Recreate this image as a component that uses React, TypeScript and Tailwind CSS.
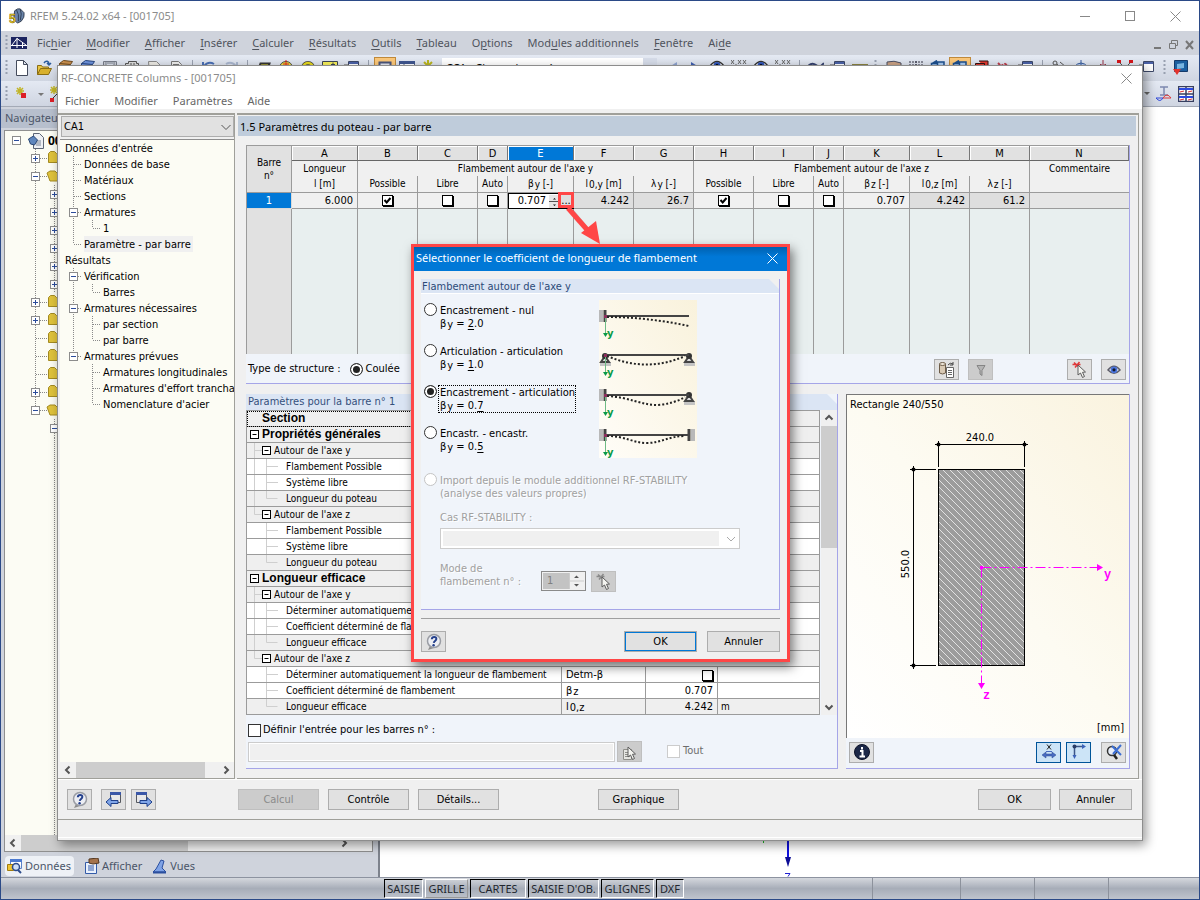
import React, { useState } from 'react';
import type { ReactNode } from 'react';

const TAHOMA = "font-['DejaVu_Sans_Condensed','DejaVu_Sans',sans-serif]";
const SEGOE = "font-['Noto_Sans',sans-serif]";

/* ---------- icons ---------- */

const glyphs: Record<string, ReactNode> = {
  doc: <path d="M2.500.5h7l4 4v11h-11zM9.500.5v4h4" fill="#fff" stroke="#444b5c" />,
  folder: (
    <>
      <path d="M1.500 14.500v-9h4l1 1.500h6v3" fill="#e8c545" stroke="#8a6d13" />
      <path d="M1.500 14.500l3-6h11l-3 6z" fill="#d8b02c" stroke="#8a6d13" />
      <path d="M8 3c2-3 5-2 5 1m-2-1l2 2 2-2" fill="none" stroke="#2a5a9c" strokeWidth="1.500" />
    </>
  ),
  brown: <path d="M1.500 3.500l4-3 9 1-2 3v9h-11zM1.500 3.500l11 1" fill="#c98f4e" stroke="#6e4a1e" />,
  blue: <path d="M1.500 3.500l4-3 9 1-2 3v9h-11zM1.500 3.500l11 1" fill="#6d92dc" stroke="#26447f" />,
  disk: <path d="M1.500 1.500h13v13h-13zM4 1v5h8V1M5 3h6" fill="#c9cdd6" stroke="#777c88" />,
  calc: <path d="M1.500 3.500h3v-2h8v2h2v11h-13zM4 5.500h8M7 3v3m3-3v3" fill="#ddd" stroke="#555" />,
  paper: <path d="M2.500 1.500h8l4 4-3 9h-8z" fill="#eceae4" stroke="#888" />,
  print: <path d="M3.500 1.500h7l3 3v10h-10zM5 4.500h6" fill="#eee" stroke="#777" />,
  undo: <path d="M3 10C2 4 8 1 13 4M2 2v6h6" fill="none" stroke="#4a6fb5" strokeWidth="2" />,
  redo: <path d="M13 10C14 4 8 1 3 4m11-2v6H8" fill="none" stroke="#a9b6cf" strokeWidth="2" />,
  shape: <path d="M4.500 3.500h9l-3 9h-9z" fill="#f1e437" stroke="#333" strokeWidth="2" />,
  circle: <><circle cx="8" cy="8" r="6.500" fill="#f3e83c" stroke="#444" /><path d="M8 0v6M5 4h6" stroke="#d22" /></>,
  ring: <><circle cx="8" cy="8" r="5" fill="none" stroke="#444" strokeWidth="4" /><circle cx="8" cy="8" r="5" fill="none" stroke="#e6d81e" strokeWidth="2.500" /></>,
  sheet: <path d="M.5 1.500h15v12H.5zM9 4.500h4m-2-2v4" fill="#f6ef5b" stroke="#3d4555" />,
  win: <><path d="M4.500 1.500h10v10h-10z" fill="#fff" stroke="#3d4868" /><path d="M5 2h9v2H5z" fill="#4b62a8" /><path d="M0 5h5" stroke="#555" /></>,
  panel: <path d="M2.500 2.500h11v9h-11zM4 7h7" fill="#e5e8f0" stroke="#4b557a" strokeWidth="2" />,
  grid: <><path d="M.5 1.500h15v12H.5zM.5 6h15M5 4v9" fill="#fff" stroke="#5a647f" /><path d="M0 1h16v3H0z" fill="#3f568f" /></>,
  star: <path d="M7 0v12M1.500 6h11M3 2l8 8m0-8l-8 8" stroke="#b9b41e" strokeWidth="2" />,
  left: <path d="M12 2v10L4 7z" fill="#8ea2cf" />,
  right: <path d="M4 2v10l8-5z" fill="#3f5fb0" />,
  eye: <><path d="M1 6q7-9 14 0-7 7-14 0z" fill="#fff" stroke="#333" strokeWidth="1.500" /><circle cx="8" cy="5.500" r="3.500" fill="#2d52b5" /><circle cx="8" cy="5.500" r="1.500" fill="#000" /></>,
  xxx: <path d="M0 0l3 4m0-4L0 4M7 0l3 4m0-4L7 4M12 0l3 4m0-4l-3 4M5 4v1" stroke="#666" fill="none" />,
  wave: <path d="M0 6q4-4 8-1t8-2" fill="none" stroke="#34406e" strokeWidth="2" />,
  tag: <path d="M0 5h16M2 4v2m4-2v2m6-2v2" fill="none" stroke="#8b8440" strokeWidth="2" />,
  hand: <path d="M1 2q7-2 14 1v5H1z" fill="#c9a184" stroke="#4b4f63" />,
  dots: <path d="M1 2h14M1 5h14M8 1v6" stroke="#334" strokeDasharray="2 1" />,
  cube: <path d="M1.500 5.500v-2h6v8h-6zM5 2h9v8H8M1.500 4L7 .5" fill="#a7c8ee" stroke="#1d4f8e" strokeWidth="1.500" />,
  redcube: <path d="M1.500 5.500v-2h9v8h-9zM5 1h9v8h-3" fill="#e23b31" stroke="#301313" />,
  pins: <path d="M2 3l3 3 4-2 5 3" fill="none" stroke="#ba3c4a" strokeWidth="2" strokeDasharray="3 1" />,
  loop: <><circle cx="4" cy="3" r="2" fill="none" stroke="#555" /><path d="M9 2l6 5M6 4l3 4" stroke="#555" /></>,
  arc: <path d="M1 7q7-8 14 0zM8 0v6" fill="#b9cdf0" stroke="#345a9c" />,
  mirror: <path d="M8 0v14M6 4l-4 5h4zm4 0l4 5h-4z" fill="none" stroke="#963344" />,
  node: <><path d="M2 2l6 6 6-6" fill="none" stroke="#555" /><path d="M0 0h4v3H0zm12 0h4v3h-4z" fill="#d4161b" /></>,
  cube3d: <><path d="M1.500.5h13v11h-13z" fill="#1c5f9f" stroke="#143a6a" /><path d="M4 4l7-1v5l-7 1z" fill="#78b4e0" /><path d="M0 9h8l-4 6z" fill="#e2322c" /></>,
};

function Glyph({ name, className = 'size-4' }: { name: string; className?: string }) {
  return (
    <svg viewBox="0 0 16 16" className={`${className} shrink-0`} aria-hidden="true">
      {glyphs[name]}
    </svg>
  );
}

function ToolButton({ name, active = false }: { name: string; active?: boolean }) {
  return (
    <button
      type="button"
      aria-label={name}
      className={`flex h-[22px] w-[22px] shrink-0 items-center justify-center ${
        active ? 'border border-[#c08a3c] bg-[#fbc779]' : ''
      }`}
    >
      <Glyph name={name} />
    </button>
  );
}

function Tools({ names, active = '' }: { names: string[]; active?: string }) {
  return (
    <>
      {names.map((n, i) =>
        n === '|' ? (
          <span key={i} className="mx-[5px] h-4 w-px shrink-0 bg-[#9aa1b0]" />
        ) : (
          <ToolButton key={i} name={n} active={active === `${n}${i}`} />
        ),
      )}
    </>
  );
}

function Grip() {
  return (
    <svg viewBox="0 0 3 16" className="h-4 w-[3px] shrink-0" aria-hidden="true">
      <path d="M1.500 0v16" stroke="#98a0b0" strokeWidth="2" strokeDasharray="2 2" />
    </svg>
  );
}

function Chevron({ dir, className = 'size-4' }: { dir: 'up' | 'down' | 'left' | 'right'; className?: string }) {
  const d = {
    up: 'M4.500 9.500L8 6l3.500 3.500',
    down: 'M4.500 6.500L8 10l3.500-3.500',
    left: 'M9.500 4.500L6 8l3.500 3.500',
    right: 'M6.500 4.500L10 8l-3.500 3.500',
  }[dir];
  return (
    <svg viewBox="0 0 16 16" className={`${className} shrink-0`} aria-hidden="true">
      <path d={d} fill="none" stroke="#555" strokeWidth="2" />
    </svg>
  );
}

function Cross({ className }: { className: string }) {
  return (
    <svg viewBox="0 0 11 11" className={`size-[11px] ${className}`} aria-hidden="true">
      <path d="M.5.5l10 10m0-10l-10 10" stroke="currentColor" fill="none" />
    </svg>
  );
}

function HelpIcon() {
  return (
    <svg viewBox="0 0 18 18" className="size-[18px]" aria-hidden="true">
      <path d="M5 13l-2 4 6-2z" fill="#8b8b8b" />
      <circle cx="9" cy="8" r="6.500" fill="#eceef4" stroke="#9a9da4" strokeWidth="1.500" />
      <path d="M6.800 6.200C7 3.300 11.800 3.300 11.300 6.200 11 8 9 8 8.800 9.800" fill="none" stroke="#24408c" strokeWidth="2" />
      <circle cx="8.600" cy="12.200" r="1.200" fill="#24408c" />
    </svg>
  );
}

function SheetArrow({ dir }: { dir: 'left' | 'right' }) {
  return (
    <svg viewBox="0 0 18 18" className="size-[18px]" aria-hidden="true">
      {dir === 'left' ? (
        <>
          <path d="M5.500 1.500h10v10h-10z" fill="#e8e8ea" stroke="#55585f" />
          <path d="M5 1h11v3H5z" fill="#3a57a8" />
          <path d="M1 11l5-4.500v3h7v3H6v3z" fill="#7fa5e8" stroke="#1d3f8a" />
        </>
      ) : (
        <>
          <path d="M1.500 1.500h10v10h-10z" fill="#e8e8ea" stroke="#55585f" />
          <path d="M1 1h11v3H1z" fill="#3a57a8" />
          <path d="M17 11l-5-4.500v3H5v3h7v3z" fill="#7fa5e8" stroke="#1d3f8a" />
        </>
      )}
    </svg>
  );
}

function PickIcon({ tone = 'red', list = false }: { tone?: 'red' | 'gray'; list?: boolean }) {
  const c = tone === 'red' ? '#e0383a' : '#8a8a8a';
  return (
    <svg viewBox="0 0 18 18" className="size-[18px]" aria-hidden="true">
      {list ? (
        <path d="M2.500 6.500h8v10h-8zM4 9.500h5M4 11.500h5M4 13.500h5" fill="#e6e6e2" stroke="#8f8f8a" />
      ) : (
        <path d="M3 1.500l5 4.500M8.500 1L4 6.500M1.500 3.500h8" stroke={c} strokeWidth="1.500" />
      )}
      <path d="M7 4v10l2.500-2 2 4.500 2-1-2-4.200 3-.3z" fill="#f4f4f0" stroke="#5c5c5c" />
    </svg>
  );
}

function EyeIcon() {
  return (
    <svg viewBox="0 0 18 18" className="size-[18px]" aria-hidden="true">
      <path d="M3 9q6-7.500 12 0-6 6.500-12 0z" fill="#eef2fb" stroke="#5c5c68" strokeWidth="1.500" />
      <circle cx="9" cy="8.800" r="3.400" fill="#4a74dc" />
      <circle cx="9" cy="8.800" r="1.600" fill="#101830" />
    </svg>
  );
}

function LogoIcon() {
  return (
    <svg viewBox="0 0 18 18" className="size-[17px]" aria-hidden="true">
      <path d="M7 3q3-3 6-2l4 4q1 5-3 9l-4 2-4-4z" fill="#6a85ab" stroke="#333e50" />
      <path d="M9 2q3 4 2 12M13 1q2 5 0 12" fill="none" stroke="#2d3b52" />
      <text x="1" y="16" fontSize="13" fontWeight="700" fill="#f3d22b" stroke="#5e4d00" strokeWidth=".5" fontFamily="Liberation Sans, sans-serif">5</text>
    </svg>
  );
}

/* ---------- small controls ---------- */

function PushButton({ children, className = '', disabled = false }: { children: ReactNode; className?: string; disabled?: boolean }) {
  return (
    <button
      type="button"
      disabled={disabled}
      className={`h-[21px] shrink-0 border text-center leading-[19px] ${
        disabled ? 'border-[#bfbfbf] bg-[#ccc] text-[#8a8a8a]' : 'border-[#adadad] bg-[#e1e1e1] text-black'
      } ${className}`}
    >
      {children}
    </button>
  );
}

function IconButton({ label, children, tone = 'normal' }: { label: string; children: ReactNode; tone?: 'normal' | 'on' | 'off' }) {
  const colors = {
    normal: 'border-[#adadad] bg-[#e1e1e1]',
    on: 'border-[#005499] bg-[#cce4f7]',
    off: 'border-[#bfbfbf] bg-[#ccc]',
  }[tone];
  return (
    <button type="button" aria-label={label} disabled={tone === 'off'} className={`flex h-[21px] w-[25px] shrink-0 items-center justify-center border ${colors}`}>
      {children}
    </button>
  );
}

function GridCheck({ label, initial = false }: { label: string; initial?: boolean }) {
  const [on, setOn] = useState(initial);
  return (
    <span className="inline-grid size-[11px] align-middle">
      <input
        type="checkbox"
        aria-label={label}
        checked={on}
        onChange={() => setOn(!on)}
        className="col-start-1 row-start-1 size-[11px] appearance-none border border-black bg-white shadow-[1px_1px_0_#000]"
      />
      {on && (
        <svg viewBox="0 0 11 11" className="pointer-events-none col-start-1 row-start-1 size-[11px]" aria-hidden="true">
          <path d="M2.500 5L4.700 7.500 8.500 3" fill="none" stroke="#000" strokeWidth="2" />
        </svg>
      )}
    </span>
  );
}

const RADIO =
  'size-[13px] shrink-0 appearance-none rounded-full border border-[#333] bg-white checked:bg-[#222] checked:shadow-[inset_0_0_0_2px_#fff] disabled:border-[#c4c4c4]';

function Toggle({ open }: { open: boolean }) {
  return (
    <svg viewBox="0 0 9 9" className="size-[9px] shrink-0" aria-hidden="true">
      <rect x=".5" y=".5" width="8" height="8" fill="#fff" stroke="#8c8c8c" />
      <path d={open ? 'M2 4.500h5' : 'M2 4.500h5M4.500 2v5'} stroke="#2b4c9b" />
    </svg>
  );
}

/* ---------- tree ---------- */

type Guide = 'T' | 'L' | 'I' | 'open' | 'none';

function GuideCell({ kind, below = true }: { kind: Guide; below?: boolean }) {
  return (
    <svg viewBox="0 0 19 16" className="h-4 w-[19px] shrink-0" aria-hidden="true">
      <g stroke="#8a8a8a" strokeDasharray="1 1" fill="none">
        {kind !== 'none' && <path d="M8.500 0v8" />}
        {kind !== 'none' && kind !== 'L' && below && <path d="M8.500 8v8" />}
        {kind !== 'none' && kind !== 'I' && <path d="M9 8.500h8" />}
      </g>
      {kind === 'open' && (
        <g>
          <rect x="4.500" y="4.500" width="8" height="8" fill="#fff" stroke="#8c8c8c" />
          <path d="M6 8.500h5" stroke="#2b4c9b" />
        </g>
      )}
    </svg>
  );
}

const moduleTree: { text: string; guides: Guide[]; end?: boolean; selected?: boolean }[] = [
  { text: "Données d'entrée", guides: [] },
  { text: 'Données de base', guides: ['T'] },
  { text: 'Matériaux', guides: ['T'] },
  { text: 'Sections', guides: ['T'] },
  { text: 'Armatures', guides: ['open'] },
  { text: '1', guides: ['I', 'L'] },
  { text: 'Paramètre - par barre', guides: ['L'], selected: true },
  { text: 'Résultats', guides: [] },
  { text: 'Vérification', guides: ['open'] },
  { text: 'Barres', guides: ['I', 'L'] },
  { text: 'Armatures nécessaires', guides: ['open'] },
  { text: 'par section', guides: ['I', 'T'] },
  { text: 'par barre', guides: ['I', 'L'] },
  { text: 'Armatures prévues', guides: ['open'], end: true },
  { text: 'Armatures longitudinales', guides: ['none', 'T'] },
  { text: "Armatures d'effort tranchant", guides: ['none', 'T'] },
  { text: "Nomenclature d'acier", guides: ['none', 'L'] },
];

function ModuleTree() {
  return (
    <ul className="flex-1 overflow-hidden">
      {moduleTree.map((n) => (
        <li key={n.text} className="flex h-4 items-center whitespace-nowrap">
          {n.guides.map((g, i) => (
            <GuideCell key={i} kind={g} below={!n.end} />
          ))}
          <span className={`h-4 pt-0.5 leading-[14px] ${n.selected ? 'bg-[#f0f0f0] pr-0.5' : ''}`}>{n.text}</span>
        </li>
      ))}
    </ul>
  );
}

const projectRows: ('plus' | 'minus' | 'leaf' | 'sub')[] = [
  'plus', 'minus', 'sub', 'sub', 'sub', 'sub', 'sub', 'sub', 'plus', 'plus', 'leaf', 'leaf', 'leaf', 'plus', 'minus',
];

function ProjectTree() {
  return (
    <div className="flex flex-1 flex-col overflow-hidden">
      <div className="flex h-[18px] items-center gap-[7px] pl-[7px] pt-px">
        <Toggle open />
        <svg viewBox="0 0 16 16" className="size-4" aria-hidden="true">
          <path d="M5.500.5h6l4 4v11h-10z" fill="#eef0f4" stroke="#5d6575" />
          <path d="M8 8h5M8 10h5M8 12h5" stroke="#7b8496" />
          <path d="M.5 6l5-3 4 4-3 5-4-1z" fill="#5f86bd" stroke="#2b4876" />
        </svg>
        <b className="-ml-[3px] text-[12px]">001705</b>
      </div>
      {projectRows.map((r, i) => (
        <svg key={i} viewBox="0 0 60 18" className="h-[18px] w-[60px] shrink-0" aria-hidden="true">
          <path d={i === 14 ? 'M30.500 0v9' : 'M30.500 0v18'} stroke="#888" strokeDasharray="1 1" />
          {r !== 'sub' && <path d="M31 9.500h12" stroke="#888" strokeDasharray="1 1" />}
          {r === 'sub' && <path d="M49.500 0v18" stroke="#888" strokeDasharray="1 1" />}
          {(r === 'plus' || r === 'minus') && (
            <>
              <rect x="26.500" y="5.500" width="8" height="8" fill="#fff" stroke="#8c8c8c" />
              <path d={r === 'plus' ? 'M28 9.500h5M30.500 7v5' : 'M28 9.500h5'} stroke="#2b4c9b" />
            </>
          )}
          {r === 'sub' ? (
            <>
              <rect x="45.500" y="5.500" width="8" height="8" fill="#fff" stroke="#8c8c8c" />
              <path d="M47 9.500h5M49.500 7v5" stroke="#2b4c9b" />
            </>
          ) : (
            <path d={r === 'minus' ? 'M42 6l3-2h5l2 2h8v8H45z' : 'M43.500 4.500l2-2h4l2 2h8v9h-16z'} fill="#dfc23c" stroke="#a38a22" />
          )}
        </svg>
      ))}
      <svg viewBox="0 0 60 18" className="h-[18px] w-[60px] shrink-0" aria-hidden="true">
        <path d="M49.500 0v18" stroke="#888" strokeDasharray="1 1" />
        <rect x="45.500" y="5.500" width="8" height="8" fill="#fff" stroke="#8c8c8c" />
        <path d="M47 9.500h5" stroke="#2b4c9b" />
      </svg>
      <div className="ml-[49px] flex-1 border-l border-dotted border-[#888]" />
    </div>
  );
}

/* ---------- main application frame ---------- */

const mainMenu: [string, string, string][] = [
  ['Fic', 'h', 'ier'], ['', 'M', 'odifier'], ['', 'A', 'fficher'], ['', 'I', 'nsérer'], ['', 'C', 'alculer'],
  ['', 'R', 'ésultats'], ['', 'O', 'utils'], ['', 'T', 'ableau'], ['O', 'p', 'tions'], ['Mod', 'u', 'les additionnels'],
  ['', 'F', 'enêtre'], ['Ai', 'd', 'e'],
];

function MainChrome() {
  return (
    <>
      <header className={`flex h-[30px] shrink-0 items-center bg-white pl-[7px] pr-[18px] text-[11px] text-[#8c8c8c] ${SEGOE}`}>
        <LogoIcon />
        <span className="ml-[5px]">RFEM 5.24.02 x64 - [001705]</span>
        <div className="ml-auto flex items-center gap-[35px]">
          <button type="button" aria-label="Réduire" className="h-px w-[10px] bg-[#888]" />
          <button type="button" aria-label="Agrandir" className="size-[10px] border border-[#888]" />
          <button type="button" aria-label="Fermer"><Cross className="text-[#888]" /></button>
        </div>
      </header>
      <nav className={`flex h-6 shrink-0 items-center bg-[#cfd3dc] pl-[4px] pr-1 text-[11px] text-[#4f535c] ${SEGOE}`}>
        <Grip />
        <svg viewBox="0 0 16 12" className="ml-[3px] mr-[10px] h-3 w-4" aria-hidden="true">
          <path d="M0 0h16v12H0z" fill="#1d2560" />
          <path d="M0 8.500h16M6 1v10M11.500 5v6M1 8l5-6.500L15 8M6 2l0 0" stroke="#fff" fill="none" />
        </svg>
        <div className="flex gap-[15px]">
          {mainMenu.map(([a, b, c]) => (
            <button type="button" key={a + b + c}>
              {a}<u className="underline-offset-2">{b}</u>{c}
            </button>
          ))}
        </div>
        <svg viewBox="0 0 42 12" className="ml-auto mt-1 h-3 w-[42px]" aria-hidden="true">
          <g fill="none" stroke="#777">
            <path d="M1 9h7" strokeWidth="2" />
            <path d="M16.500 4.500h6v5h-6zM18.500 4V1.500h6v5H23" />
            <path d="M33 2l7 8m0-8l-7 8" strokeWidth="2" />
          </g>
        </svg>
      </nav>
      <div className={`flex h-[26px] shrink-0 items-center overflow-hidden bg-gradient-to-b from-[#e4e9f3] to-[#cfd5e1] pl-[4px] text-[11px] ${SEGOE}`}>
        <Grip />
        <span className="w-[3px] shrink-0" />
        <Tools
          names={['doc', 'folder', 'brown', 'blue', 'disk', 'calc', 'paper', 'print', '|', 'undo', 'redo', '|', 'shape', 'circle', 'ring', 'sheet', 'win', '|', 'panel', 'grid']}
          active="panel18"
        />
        <ToolButton name="star" />
        <div className="ml-[2px] flex h-5 w-[215px] shrink-0 items-center bg-white">
          <span className="pl-1 text-black">CC1 - Charge imposée</span>
          <span className="ml-auto h-full w-[14px] bg-[#d5dbe8] text-center text-[8px] leading-5">▼</span>
        </div>
        <span className="w-[5px] shrink-0" />
        <Tools names={['left', 'right', 'eye', 'xxx', 'eye', 'xxx', '|', 'wave', 'win', 'tag']} />
        <span className="w-[3px] shrink-0" />
        <Grip />
        <span className="w-[6px] shrink-0" />
        <Tools names={['hand', 'dots', 'cube', 'cube', 'redcube', 'pins', 'win', '|', 'loop', 'arc', 'mirror', 'node', 'win']} active="cube3" />
        <div className="ml-auto flex shrink-0 items-center gap-[7px] pr-[10px]">
          <Grip />
          <Glyph name="cube3d" />
        </div>
      </div>
      <div className="flex h-[26px] shrink-0 items-center border-b border-[#a4aab6] bg-gradient-to-b from-[#e4e9f3] to-[#cfd5e1] pl-[4px]">
        <Grip />
        <svg viewBox="0 0 46 18" className="ml-[8px] h-[18px] w-[46px]" aria-hidden="true">
          <path d="M4 2v8M0 6h8M1 3l6 6m0-6L1 9" stroke="#c1b528" strokeWidth="1.500" />
          <path d="M5 8h5v5H5z" fill="#dc1f27" />
          <path d="M22 8h6l-3 3z" fill="#777" />
          <path d="M38 1v8M34 5h8M35 2l6 6m0-6l-6 6" stroke="#c1b528" strokeWidth="1.500" />
          <path d="M36 14l9-9" stroke="#333" /><path d="M34 13h4v4h-4z" fill="#dc1f27" />
        </svg>
        <div className="ml-auto flex items-center gap-[5px] pr-[5px]">
          <svg viewBox="0 0 6 4" className="h-1 w-[6px]" aria-hidden="true"><path d="M0 0h6L3 3z" fill="#666" /></svg>
          <svg viewBox="0 0 18 18" className="size-[18px]" aria-hidden="true">
            <path d="M5 2h8M9 2v8M5 10h8" stroke="#7d88b0" strokeWidth="1.500" />
            <path d="M1 13q4 5 7 0z" fill="none" stroke="#2f48d8" />
            <path d="M8 13q4-6 8 0z" fill="none" stroke="#dc3b3b" />
          </svg>
          <svg viewBox="0 0 16 16" className="size-4" aria-hidden="true">
            <path d="M.5.500h15v15H.5zM.5 8h15M8 .5v15" fill="#fff" stroke="#383f60" strokeWidth="1.500" />
            <path d="M1 3h14M1 11h14" stroke="#2d4be0" strokeWidth="2" />
            <path d="M2 6l4-1m4 1l4-1M2 14l4-1m4 1l4-1" stroke="#d93030" />
          </svg>
        </div>
      </div>
    </>
  );
}

function ScrollBarH({ className }: { className: string }) {
  return (
    <div className="flex h-4 shrink-0 items-center bg-[#f0f0f0]">
      <Chevron dir="left" />
      <div className="flex flex-1">
        <div className={`h-4 bg-[#cdcdcd] ${className}`} />
      </div>
      <Chevron dir="right" />
    </div>
  );
}

function Workspace() {
  return (
    <div className="flex flex-1 bg-[#cfd3dc]">
      <aside className={`flex w-[377px] shrink-0 flex-col text-[11px] text-[#4b5568] ${SEGOE}`}>
        <div className="mt-0.5 h-[19px] bg-[#b7bfcd] pl-1 leading-[18px]">Navigateur</div>
        <div className="ml-[3px] mr-[5px] mt-[2px] flex flex-1 flex-col border border-[#8f8f8f] bg-[#fcfcf4] text-black">
          <ProjectTree />
          <div className="bg-[#f0f0f0]">
            <div className="w-[347px]"><ScrollBarH className="w-[167px]" /></div>
          </div>
        </div>
        <div className="flex h-[25px] items-center gap-[10px] pl-[4px] pt-[3px] text-[11px]">
          <button type="button" className="flex h-5 items-center gap-0.5 rounded-sm bg-[#eef1f6] pl-0.5 pr-[3px]">
            <svg viewBox="0 0 16 16" className="size-4" aria-hidden="true">
              <path d="M3.500 1.500h11v9h-11z" fill="#fff" stroke="#5a82c8" /><path d="M3 1h12v3H3z" fill="#4c7ad0" />
              <path d="M.5 6.500h6v6h-6z" fill="#f0c433" stroke="#a17c0d" />
              <circle cx="9" cy="9" r="3.500" fill="#cfe0f8" stroke="#2d4c8c" strokeWidth="1.500" /><path d="M11 12l3 3" stroke="#2d4c8c" strokeWidth="2" />
            </svg>
            Données
          </button>
          <button type="button" className="flex items-center gap-0.5">
            <svg viewBox="0 0 16 16" className="size-4" aria-hidden="true">
              <path d="M1.500 4.500h11v11h-11z" fill="#eaf1fc" stroke="#335ba8" /><path d="M4 8h6M4 10h6M4 12h6" stroke="#335ba8" />
              <path d="M5 1l9-1 1 5-6 1-4-1z" fill="#a5734b" stroke="#543821" />
            </svg>
            Afficher
          </button>
          <button type="button" className="flex items-center gap-0.5">
            <svg viewBox="0 0 16 16" className="size-4" aria-hidden="true">
              <path d="M1 14l3-3 5-9 3 1-2 7 4 4z" fill="#7fa3e6" stroke="#2b4f9f" /><path d="M1 14.500h13" stroke="#2b4f9f" strokeWidth="2" />
            </svg>
            Vues
          </button>
        </div>
      </aside>
      <main className="flex min-w-0 flex-1 items-end border-l-2 border-[#7d828c] bg-white">
        <svg viewBox="0 0 60 45" className="ml-[370px] h-[45px] w-[60px]" aria-hidden="true">
          <path d="M13.500 6v5" stroke="#22c02a" />
          <path d="M38 0v28" stroke="#1010e0" strokeWidth="2" />
          <path d="M35 25h6l-3 10z" fill="#0c0c96" />
          <path d="M35 41.500h5l-2 3" fill="none" stroke="#2020d0" />
        </svg>
      </main>
    </div>
  );
}

function StatusBar() {
  const cells: [string, string, boolean][] = [
    ['SAISIE', 'w-[39px]', true], ['GRILLE', 'w-[43px]', false], ['CARTES', 'w-[56px]', true],
    ["SAISIE D'OB.", 'w-[71px]', true], ['GLIGNES', 'w-[53px]', true], ['DXF', 'w-[28px]', true],
  ];
  return (
    <footer className={`flex h-[22px] shrink-0 items-center border-t border-[#8d93a0] bg-gradient-to-b from-[#d5d8de] via-[#a7adb8] to-[#bfc4cd] text-[11px] text-[#22262e] ${SEGOE}`}>
      <div className="ml-[383px] flex gap-[2px]">
        {cells.map(([t, w, on]) => (
          <button
            type="button"
            key={t}
            className={`h-[19px] whitespace-nowrap border text-center leading-[16px] ${w} ${
              on ? 'border-b-white border-l-black border-r-white border-t-black' : 'border-b-[#999] border-l-white border-r-[#999] border-t-white'
            }`}
          >
            {t}
          </button>
        ))}
      </div>
      <div className="ml-auto flex h-full">
        {['w-[88px]', 'w-[74px]', 'w-[74px]', 'w-[91px]'].map((w, i) => (
          <span key={i} className={`h-full border-l border-[#8d929c] ${w}`} />
        ))}
      </div>
    </footer>
  );
}

/* ---------- module window: bar table ---------- */

function Sub({ base, sub, unit }: { base: string; sub: string; unit?: string }) {
  return (
    <span className="whitespace-nowrap">
      {base}
      <span className="relative top-px ml-px">{sub}</span>
      {unit && ` ${unit}`}
    </span>
  );
}

const letters = ['A', 'B', 'C', 'D', 'E', 'F', 'G', 'H', 'I', 'J', 'K', 'L', 'M', 'N'];
const colWidths = [45, 66, 60, 60, 30, 66, 60, 60, 60, 60, 30, 66, 60, 60];

function BarTable() {
  const axis = (a: string): ReactNode[] => [
    'Possible', 'Libre', 'Auto',
    <Sub base="β" sub={a} unit="[-]" />, <Sub base="l" sub={`0,${a}`} unit="[m]" />, <Sub base="λ" sub={a} unit="[-]" />,
  ];
  const cell = 'border-b border-r border-[#9b9b9b] p-0';
  return (
    <table className="w-full table-fixed border-separate border-spacing-0 border-l border-t border-[#9b9b9b] text-[10px] text-black">
      <colgroup>
        {colWidths.map((w, i) => <col key={i} style={{ width: w }} />)}
        <col />
      </colgroup>
      <thead className="bg-[#f0f0f0] font-normal">
        <tr className="h-[15px]">
          <th rowSpan={3} className={`${cell} bg-[#e1e1e1] align-middle font-normal leading-[13px]`}>Barre<br />n°</th>
          {letters.map((l) => (
            <th
              key={l}
              className={`border-b border-r border-b-[#666] border-r-[#777] p-0 text-[11px] font-normal leading-[13px] shadow-[inset_1px_1px_0_#fff] ${
                l === 'E' ? 'bg-[#0078d7] text-white' : 'bg-[#e1e1e1]'
              }`}
            >
              {l}
            </th>
          ))}
        </tr>
        <tr className="h-[15px] leading-3">
          <th className="border-r border-[#9b9b9b] p-0 font-normal">Longueur</th>
          <th colSpan={6} className="border-r border-[#9b9b9b] p-0 font-normal">Flambement autour de l'axe y</th>
          <th colSpan={6} className="border-r border-[#9b9b9b] p-0 font-normal">Flambement autour de l'axe z</th>
          <th className="p-0 font-normal">Commentaire</th>
        </tr>
        <tr className="h-[17px] leading-3">
          {['l [m]', ...axis('y'), ...axis('z'), ''].map((h, i) => (
            <th key={i} className={`${cell} font-normal ${i === 13 ? 'border-r-0' : ''}`}>{h}</th>
          ))}
        </tr>
      </thead>
      <tbody>
        <tr className="h-4 text-right text-[11px] leading-[14px]">
          <th scope="row" className={`${cell} border-[#d9d9d9] bg-[#0078d7] text-center font-normal text-white`}>1</th>
          <td className={`${cell} bg-[#f0f0f0] pr-1`}>6.000</td>
          <td className={`${cell} bg-[#f0f0f0] text-center leading-none`}><GridCheck label="Possible axe y" initial /></td>
          <td className={`${cell} bg-[#f0f0f0] text-center leading-none`}><GridCheck label="Libre axe y" /></td>
          <td className={`${cell} bg-[#f0f0f0] text-center leading-none`}><GridCheck label="Auto axe y" /></td>
          <td className="border border-black bg-white p-0">
            <div className="flex h-[14px] items-center justify-end">
              <span className="mr-[3px] leading-[14px]">0.707</span>
              <svg viewBox="0 0 10 13" className="h-[13px] w-[10px]" aria-hidden="true">
                <path d="M0 0h10v13H0z" fill="#e6e6e6" /><path d="M0 6.500h10" stroke="#555" /><path d="M4 4.500h3L5.500 3zM4 9.500h3L5.500 11z" fill="#111" />
              </svg>
              <button type="button" aria-label="Sélectionner le coefficient" className="h-[13px] w-[14px] bg-[#dedede] text-center leading-[8px]">...</button>
            </div>
          </td>
          <td className={`${cell} bg-[#dedede] pr-1`}>4.242</td>
          <td className={`${cell} bg-[#dedede] pr-1`}>26.7</td>
          <td className={`${cell} bg-[#f0f0f0] text-center leading-none`}><GridCheck label="Possible axe z" initial /></td>
          <td className={`${cell} bg-[#f0f0f0] text-center leading-none`}><GridCheck label="Libre axe z" /></td>
          <td className={`${cell} bg-[#f0f0f0] text-center leading-none`}><GridCheck label="Auto axe z" /></td>
          <td className={`${cell} bg-[#f0f0f0] pr-1`}>0.707</td>
          <td className={`${cell} bg-[#dedede] pr-1`}>4.242</td>
          <td className={`${cell} bg-[#dedede] pr-1`}>61.2</td>
          <td className={`${cell} border-r-0 bg-[#e6e6e6]`} />
        </tr>
        <tr className="h-[145px]">
          <td className="border-r border-[#9b9b9b] bg-[#e1e1e1] p-0" />
          {letters.map((l) => (
            <td key={l} className={`bg-[#e8efef] p-0 ${l === 'N' ? '' : 'border-r border-[#9b9b9b]'}`} />
          ))}
        </tr>
      </tbody>
    </table>
  );
}

/* ---------- module window: property grid ---------- */

interface PropRow {
  level: 0 | 1 | 2;
  text: string;
  white?: boolean;
  trunk?: 'T' | 'L' | 'I' | '';
  last?: boolean;
  noToggle?: boolean;
  symbol?: ReactNode;
  value?: ReactNode;
  unit?: string;
}

const propRows: PropRow[] = [
  { level: 0, text: 'Section', noToggle: true },
  { level: 0, text: 'Propriétés générales' },
  { level: 1, text: "Autour de l'axe y", trunk: 'T' },
  { level: 2, text: 'Flambement Possible', trunk: 'I', white: true },
  { level: 2, text: 'Système libre', trunk: 'I', white: true },
  { level: 2, text: 'Longueur du poteau', trunk: 'I', last: true },
  { level: 1, text: "Autour de l'axe z", trunk: 'L' },
  { level: 2, text: 'Flambement Possible', white: true },
  { level: 2, text: 'Système libre', white: true },
  { level: 2, text: 'Longueur du poteau', last: true },
  { level: 0, text: 'Longueur efficace' },
  { level: 1, text: "Autour de l'axe y", trunk: 'T' },
  { level: 2, text: 'Déterminer automatiquement', trunk: 'I', white: true },
  { level: 2, text: 'Coefficient déterminé de flambement', trunk: 'I', white: true },
  { level: 2, text: 'Longueur efficace', trunk: 'I', last: true },
  { level: 1, text: "Autour de l'axe z", trunk: 'L' },
  { level: 2, text: 'Déterminer automatiquement la longueur de flambement', white: true, symbol: 'Detm-β', value: <GridCheck label="Déterminer automatiquement" /> },
  { level: 2, text: 'Coefficient déterminé de flambement', white: true, symbol: <Sub base="β" sub="z" />, value: '0.707' },
  { level: 2, text: 'Longueur efficace', last: true, symbol: <Sub base="l" sub="0,z" />, value: '4.242', unit: 'm' },
];

function PropGuide({ row }: { row: PropRow }) {
  const box = row.level === 0 ? 7.5 : 19.5;
  const width = ['w-[15px]', 'w-[27px]', 'w-[39px]'][row.level];
  return (
    <svg viewBox={`0 0 ${[15, 27, 39][row.level]} 15`} className={`h-[15px] shrink-0 ${width}`} aria-hidden="true">
      <g stroke="#cfcfcf" fill="none">
        {row.trunk && <path d={row.trunk === 'L' ? 'M7.500 0v7.500h8' : row.trunk === 'T' ? 'M7.500 0v15M8 7.500h8' : 'M7.500 0v15'} />}
        {row.level === 2 && <path d={row.last ? 'M19.500 0v7.500h11' : 'M19.500 0v15M20 7.500h11'} />}
      </g>
      {row.level < 2 && !row.noToggle && (
        <>
          <rect x={box - 4} y="3.500" width="8" height="8" fill="#fff" stroke="#000" />
          <path d={`M${box - 2} 7.500h4`} stroke="#000" />
        </>
      )}
    </svg>
  );
}

function PropertyGrid() {
  return (
    <div className="flex">
      <table className="min-w-0 flex-1 table-fixed border-separate border-spacing-0 border-l border-t border-[#9b9b9b] text-[10px] text-black">
        <colgroup>
          <col />
          <col className="w-[84px]" />
          <col className="w-[72px]" />
          <col className="w-[102px]" />
        </colgroup>
        <tbody>
          {propRows.map((r, i) => {
            const bg = r.white ? 'bg-white' : 'bg-[#efefef]';
            const split = !!r.symbol;
            const edge = `h-4 border-b border-[#9b9b9b] p-0 leading-[15px] ${bg}`;
            return (
              <tr key={i}>
                <td className={`${edge} ${split ? 'border-r' : ''} ${i === 0 ? 'outline-1 -outline-offset-1 outline-dotted outline-black' : ''}`}>
                  <div className="flex h-[15px] items-center whitespace-nowrap">
                    <PropGuide row={r} />
                    {r.level === 0 ? (
                      <b className="font-['Liberation_Sans',sans-serif] text-[12px] leading-[15px]">{r.text}</b>
                    ) : (
                      r.text
                    )}
                  </div>
                </td>
                <td className={`${edge} ${split ? 'border-r' : ''} pl-1 text-[11px]`}>{r.symbol}</td>
                <td className={`${edge} ${split ? 'border-r' : ''} pr-[4px] text-right text-[11px]`}>{r.value}</td>
                <td className={`${edge} border-r pl-[3px]`}>{r.unit}</td>
              </tr>
            );
          })}
        </tbody>
      </table>
      <div className="ml-px flex w-[16px] shrink-0 flex-col bg-[#f0f0f0]">
        <Chevron dir="up" />
        <div className="h-[122px] bg-[#cdcdcd]" />
        <Chevron dir="down" className="mt-auto size-4" />
      </div>
    </div>
  );
}

/* ---------- module window: section drawing ---------- */

function SectionDrawing() {
  return (
    <svg viewBox="0 0 282 343" className="h-[343px] w-full font-['DejaVu_Sans_Condensed',sans-serif]" role="img" aria-label="Rectangle 240/550">
      <defs>
        <pattern id="hatch" width="7" height="7" patternUnits="userSpaceOnUse">
          <path d="M-1-1l9 9M-1 6l2 2M6-1l2 2" stroke="#e2e2e2" />
        </pattern>
      </defs>
      <text x="3" y="13" fontSize="11" fill="#000">Rectangle 240/550</text>
      <rect x="91.500" y="74.500" width="86" height="196" fill="#9c9c9c" />
      <rect x="91.500" y="74.500" width="86" height="196" fill="url(#hatch)" stroke="#000" />
      <g stroke="#000" fill="none">
        <path d="M88 49.500h93M91.500 46v26M177.500 46v26M66.500 71v203M63 74.500h26M63 270.500h26" />
      </g>
      <g fill="#000">
        <circle cx="91.500" cy="49.500" r="2" /><circle cx="177.500" cy="49.500" r="2" />
        <circle cx="66.500" cy="74.500" r="2" /><circle cx="66.500" cy="270.500" r="2" />
      </g>
      <text x="133" y="46" fontSize="11" textAnchor="middle">240.0</text>
      <text x="62" y="169" fontSize="11" textAnchor="middle" transform="rotate(-90 62 169)">550.0</text>
      <g stroke="#f0f" fill="none" strokeDasharray="10 3 2 3">
        <path d="M134.500 172.500h116M134.500 172.500v118" />
      </g>
      <path d="M133 171h3v3h-3zM250 169l6 3.500-6 3.500zM131 288h7l-3.500 6z" fill="#f0f" />
      <g fill="#f0f" fontFamily="Liberation Mono, monospace" fontSize="12" fontWeight="700">
        <text x="257" y="183">y</text>
        <text x="136" y="304">z</text>
      </g>
      <text x="277" y="336" fontSize="11" textAnchor="end">[mm]</text>
    </svg>
  );
}

function DrawingPanel() {
  return (
    <section className="flex flex-col border-b border-r border-[#a5a5e8] bg-[#f0f4fa]">
      <div className="border-l border-t border-[#777] bg-gradient-to-bl from-[#faf3df] via-[#fdfbf2] to-white">
        <SectionDrawing />
      </div>
      <div className="flex h-[28px] items-center gap-[5px] px-[3px]">
        <IconButton label="Informations">
          <svg viewBox="0 0 18 18" className="size-[18px]" aria-hidden="true">
            <circle cx="9" cy="9" r="7.500" fill="#1c2848" stroke="#0c1228" />
            <path d="M9 4v2.500M7 8h2.500v5M6.500 13.500h5.500" stroke="#fff" strokeWidth="2" fill="none" />
          </svg>
        </IconButton>
        <span className="ml-auto" />
        <IconButton label="Dimensions" tone="on">
          <svg viewBox="0 0 18 18" className="size-[18px]" aria-hidden="true">
            <path d="M7 1.500l4 5m0-5l-4 5" stroke="#222" />
            <path d="M6 8.500h6" stroke="#4a6cc0" />
            <path d="M2 12l4-3v2h6V9l4 3-4 3v-2H6v2z" fill="#4a6cc0" stroke="#2b4b94" strokeWidth=".5" />
          </svg>
        </IconButton>
        <IconButton label="Axes" tone="on">
          <svg viewBox="0 0 18 18" className="size-[18px]" aria-hidden="true">
            <path d="M3 3.500h10M4.500 3v10" stroke="#3c5688" strokeWidth="1.500" />
            <path d="M12 1l4 2.500L12 6zM2.500 12h4l-2 4z" fill="#3c62b8" /><circle cx="4.500" cy="3.500" r="2" fill="#2a3d66" />
          </svg>
        </IconButton>
        <span className="w-0" />
        <IconButton label="Zoom tout">
          <svg viewBox="0 0 18 18" className="size-[18px]" aria-hidden="true">
            <circle cx="7" cy="8" r="4.500" fill="#e8eefa" stroke="#333" strokeWidth="1.500" />
            <path d="M9 12l3 4" stroke="#222" strokeWidth="2.500" />
            <path d="M7 3l9 9M16 2L8 11" stroke="#3c6ed2" strokeWidth="2" />
          </svg>
        </IconButton>
      </div>
    </section>
  );
}

/* ---------- module window ---------- */

function ModuleWindow() {
  return (
    <section className={`absolute left-[56px] right-[56px] top-[64px] flex flex-col border border-[#8d8d8d] bg-[#f0f0f0] text-[11px] text-black shadow-[3px_4px_10px_rgba(0,0,0,0.4)] ${TAHOMA}`}>
      <div className={`flex h-6 items-center justify-between bg-white pl-[3px] pr-[10px] text-[#8c8c8c] ${SEGOE}`}>
        <span>RF-CONCRETE Columns - [001705]</span>
        <button type="button" aria-label="Fermer la fenêtre"><Cross className="text-[#888]" /></button>
      </div>
      <nav className={`flex h-[19px] gap-[15px] bg-white pl-[7px] pt-[3px] leading-4 text-[#666] ${SEGOE}`}>
        {['Fichier', 'Modifier', 'Paramètres', 'Aide'].map((m) => (
          <button type="button" key={m}>{m}</button>
        ))}
      </nav>

      <div className="mt-1 flex">
        <div className="flex w-[177px] shrink-0 flex-col border-b border-r border-t-2 border-[#a0a09a] pl-[3px] pt-px">
          <div className="grid">
            <select aria-label="Cas de calcul" className="col-start-1 row-start-1 h-[21px] appearance-none border border-[#adadad] bg-[#e1e1e1] pl-0.5 pt-0.5">
              <option>CA1</option>
            </select>
            <svg viewBox="0 0 16 16" className="pointer-events-none col-start-1 row-start-1 size-4 self-center justify-self-end" aria-hidden="true">
              <path d="M3.500 6L8 10.500 12.500 6" fill="none" stroke="#555" />
            </svg>
          </div>
          <div className="-ml-px mt-0.5 flex flex-1 flex-col overflow-hidden border-t border-[#8d8d8d] bg-[#fcfcf4] pl-[5px]">
            <ModuleTree />
            <div className="-ml-[5px]"><ScrollBarH className="w-[129px]" /></div>
          </div>
        </div>

        <div className="ml-0.5 mr-[3px] min-w-0 flex-1 border-b border-r border-t-2 border-[#a0a09a] pb-[9px] pl-px pr-[2px] pt-px">
          <h1 className="h-5 bg-[#bfccdb] pl-0.5 font-['Noto_Sans',sans-serif] text-[11px] leading-[21px]">1.5 Paramètres du poteau - par barre</h1>
          <div className="pl-2 pr-[6px] pt-[9px]">
            <div className="border-b border-r border-[#a5a5e8]">
              <BarTable />
              <div className="flex h-[29px] items-center gap-[9px] bg-[#f0f4fa] pl-[2px] pr-[3px] pt-0.5">
                <span>Type de structure :</span>
                <label className="flex items-center gap-[3px]">
                  <input type="radio" name="structure" defaultChecked className={RADIO} />
                  Coulée
                </label>
                <span className="ml-auto" />
                <IconButton label="Section">
                  <svg viewBox="0 0 18 18" className="size-[18px]" aria-hidden="true">
                    <path d="M1.500 3v9q3 2 6 0V3z" fill="#d8c9b4" stroke="#6d5c48" /><ellipse cx="4.500" cy="3" rx="3" ry="1.500" fill="#efe6d8" stroke="#6d5c48" />
                    <path d="M10 4q2-3 5-1m0-2v3h-3" fill="none" stroke="#444" /><path d="M8.500 6.500h7v10h-7zM10 9.500h4M10 11.500h4M10 13.500h4" fill="#fff" stroke="#666" />
                  </svg>
                </IconButton>
                <IconButton label="Filtre" tone="off">
                  <svg viewBox="0 0 18 18" className="size-[18px]" aria-hidden="true"><path d="M5 4.500h8l-3 5v5l-2-1.500V9.500z" fill="#b4b4b4" stroke="#858585" /></svg>
                </IconButton>
                <span className="w-14" />
                <IconButton label="Choisir la barre"><PickIcon /></IconButton>
                <IconButton label="Aperçu"><EyeIcon /></IconButton>
              </div>
            </div>

            <div className="mt-[10px] grid grid-cols-[minmax(0,1fr)_284px] gap-2">
              <section className="border-b border-r border-[#a5a5e8] bg-[#f0f4fa]">
                <h2 className="h-4 bg-[#dbe5f4] pl-0.5 leading-4 text-[#34507c] [clip-path:polygon(0_0,calc(100%-10px)_0,100%_10px,100%_100%,0_100%)]">
                  Paramètres pour la barre n° 1
                </h2>
                <PropertyGrid />
                <div className="px-[2px] pb-[6px] pt-[8px]">
                  <label className="flex h-[14px] items-center gap-0.5">
                    <input type="checkbox" className="size-[13px] appearance-none border border-[#333] bg-white" />
                    Définir l'entrée pour les barres n° :
                  </label>
                  <div className="mt-[4px] flex items-center">
                    <input aria-label="Barres" disabled className="h-5 w-[367px] border border-[#ccc] bg-[#f0f0f0] shadow-[inset_0_0_0_1px_#fff]" />
                    <span className="w-[2px]" />
                    <IconButton label="Choisir les barres" tone="off"><PickIcon tone="gray" list /></IconButton>
                    <label className="ml-[25px] flex items-center gap-[3px] text-[#6d6d6d]">
                      <input type="checkbox" disabled className="size-[13px] appearance-none border border-[#ccc] bg-white" />
                      Tout
                    </label>
                  </div>
                </div>
              </section>
              <DrawingPanel />
            </div>
          </div>
        </div>
      </div>

      <div className="flex h-[40px] items-center border-t border-white pl-[9px] pr-[10px]">
        <div className="flex">
          <IconButton label="Aide"><HelpIcon /></IconButton>
          <span className="w-[9px]" />
          <IconButton label="Masque précédent"><SheetArrow dir="left" /></IconButton>
          <span className="w-[5px]" />
          <IconButton label="Masque suivant"><SheetArrow dir="right" /></IconButton>
        </div>
        <div className="ml-[82px] flex gap-[9px]">
          <PushButton disabled className="w-[81px]">Calcul</PushButton>
          <PushButton className="w-[81px]">Contrôle</PushButton>
          <PushButton className="w-[81px]">Détails...</PushButton>
        </div>
        <PushButton className="ml-[99px] w-[81px]">Graphique</PushButton>
        <div className="ml-auto flex gap-[8px]">
          <PushButton className="w-[73px]">OK</PushButton>
          <PushButton className="w-[73px]">Annuler</PushButton>
        </div>
      </div>
      <div className="h-[19px] border-b border-t border-b-white border-t-[#a0a09a]" />
      <div className="h-[2px]" />
    </section>
  );
}

/* ---------- buckling length dialog ---------- */

function BeamCases() {
  const wall = (x: number, y: number, flip = false) => (
    <>
      <path d={flip ? `M${x + 2} ${y - 6}h4v12h-4z` : `M${x - 6} ${y - 6}h4v12h-4z`} fill="#b9b9b9" />
      <path d={`M${x} ${y - 6}v12`} stroke="#444" strokeWidth="3" />
    </>
  );
  const hinge = (x: number, y: number) => (
    <>
      <path d={`M${x - 5} ${y + 6}h11v4h-11z`} fill="#c4c4c4" />
      <path d={`M${x} ${y}l4 6h-8z`} fill="#ddd" stroke="#444" strokeWidth="2" />
      <circle cx={x} cy={y} r="3" fill="#333" />
    </>
  );
  const cases = [
    { y: 16, curve: 'M8 1Q48 1 90 10', left: wall(6, 16), right: null },
    { y: 55, curve: 'M8 1Q48 18 86 1', left: hinge(6, 56), right: hinge(90, 56) },
    { y: 95, curve: 'M8 1C30 2 42 10 58 10Q74 9 86 2', left: wall(6, 95), right: hinge(90, 95) },
    { y: 135, curve: 'M8 1C26 1 34 8 48 8S70 1 86 1', left: wall(6, 135), right: wall(90, 135, true) },
  ];
  return (
    <svg viewBox="0 0 98 158" className="mt-[6px] h-[158px] w-[98px] shrink-0" role="img" aria-label="Cas de flambement">
      <defs>
        <linearGradient id="cream" x1="1" y1="0" x2="0" y2="1">
          <stop offset="0" stopColor="#f9f2dc" />
          <stop offset="1" stopColor="#fffdf8" />
        </linearGradient>
      </defs>
      <path d="M0 0h98v158H0z" fill="url(#cream)" />
      {cases.map((c) => (
        <g key={c.y}>
          {c.left}
          {c.right}
          <path d={`M6 ${c.y}h84`} stroke="#444" strokeWidth="2" />
          <path d={c.curve} transform={`translate(0 ${c.y})`} fill="none" stroke="#222" strokeWidth="2" strokeDasharray="2 2" />
          <path d={`M6.500 ${c.y}v19`} stroke="#6fba85" />
          <path d={`M4 ${c.y + 17}h5l-2.500 4z`} fill="#0a9a46" />
          <path d={`M5 ${c.y - 1}h3v3h-3z`} fill="#8c2f5c" />
          <text x="8" y={c.y + 21} fontSize="10" fontWeight="700" fill="#0a9a46" fontFamily="DejaVu Sans, sans-serif">y</text>
        </g>
      ))}
    </svg>
  );
}

const options: [string, string, string, string][] = [
  ['Encastrement - nul', '', '2', '.0'],
  ['Articulation - articulation', '', '1', '.0'],
  ['Encastrement - articulation', '0.', '7', ''],
  ['Encastr. - encastr.', '0.', '5', ''],
];

function BucklingDialog() {
  const [picked, setPicked] = useState(2);
  return (
    <section
      role="dialog"
      aria-label="Sélectionner le coefficient de longueur de flambement"
      className={`absolute left-[410px] top-[243px] w-[379px] border-3 border-[#ff4646] bg-[#f0f0f0] text-[11px] text-black shadow-[3px_5px_10px_rgba(0,0,0,0.5)] ${TAHOMA}`}
    >
      <div className={`flex h-6 items-center justify-between bg-gradient-to-b from-[#0061b0] to-[#0078d7] to-40% pb-0.5 pl-[2px] pr-[9px] text-white ${SEGOE}`}>
        <span>Sélectionner le coefficient de longueur de flambement</span>
        <button type="button" aria-label="Fermer la boîte de dialogue"><Cross className="text-white" /></button>
      </div>
      <div className="px-[7px] pb-[7px] pt-2">
        <fieldset className="border-b border-r border-[#a5a5e8] bg-[#f0f4fa]">
          <div className="bg-[#f0f0f0]">
            <div className="h-[15px] border-b border-white bg-[#dbe5f4] pl-px leading-4 text-[#2b4a78] [clip-path:polygon(0_0,calc(100%-10px)_0,100%_10px,100%_100%,0_100%)]">
              Flambement autour de l'axe y
            </div>
          </div>
          <div className="flex">
            <div className="flex w-[178px] shrink-0 flex-col items-start gap-[13px] pl-[3px] pt-[9px]">
              {options.map(([name, a, key, b], i) => (
                <label key={name} className="flex gap-[2px] whitespace-nowrap leading-[13px]">
                  <input type="radio" name="beta" checked={picked === i} onChange={() => setPicked(i)} className={RADIO} />
                  <span className={`-ml-px block border border-dotted pl-px ${picked === i ? 'border-black' : 'border-transparent'}`}>
                    {name}
                    <br />
                    <Sub base="β" sub="y" /> = {a}<u className="underline-offset-2">{key}</u>{b}
                  </span>
                </label>
              ))}
            </div>
            <BeamCases />
          </div>
          <div className="pb-[17px] pl-[3px] pt-[15px] text-[#a0a0a0] [text-shadow:1px_1px_0_#fff]">
            <label className="flex gap-[3px] whitespace-nowrap leading-[13px]">
              <input type="radio" name="beta" disabled className={RADIO} />
              <span className="pt-px">Import depuis le module additionnel RF-STABILITY<br />(analyse des valeurs propres)</span>
            </label>
            <div className="pl-4">
              <label htmlFor="stability-case" className="mt-[11px] block leading-[14px]">Cas RF-STABILITY :</label>
              <div className="mt-[3px] grid w-[300px]">
                <select id="stability-case" disabled className="col-start-1 row-start-1 h-[21px] appearance-none border border-[#ccc] bg-[#f0f0f0] shadow-[inset_0_0_0_2px_#fff,inset_-20px_0_0_#fff]" />
                <svg viewBox="0 0 16 16" className="pointer-events-none col-start-1 row-start-1 mr-px size-4 self-center justify-self-end" aria-hidden="true">
                  <path d="M4 6l4 4 4-4" fill="none" stroke="#aaa" />
                </svg>
              </div>
              <div className="mt-[13px] flex items-start">
                <label htmlFor="buckling-mode" className="w-[101px] leading-[13px]">Mode de<br />flambement n° :</label>
                <div className="mt-[9px] flex h-5 w-[45px] border border-[#8a8a8a] bg-[#f0f0f0] p-px">
                  <input id="buckling-mode" disabled defaultValue="1" className="w-[26px] bg-[#c3c3c3] pl-1 text-[#808080]" />
                  <svg viewBox="0 0 15 16" className="h-4 w-[15px]" aria-hidden="true">
                    <path d="M0 8h15M.5 0v16" stroke="#ccc" /><path d="M5 5h5L7.500 2.500zM5 11h5l-2.500 2.500z" fill="#555" />
                  </svg>
                </div>
                <span className="w-[5px]" />
                <div className="mt-[9px]"><IconButton label="Choisir le mode" tone="off"><PickIcon tone="gray" /></IconButton></div>
              </div>
            </div>
          </div>
        </fieldset>
        <hr className="mt-[8px] border-t border-[#a0a0a0]" />
        <div className="mt-[12px] flex items-center">
          <IconButton label="Aide sur le coefficient"><HelpIcon /></IconButton>
          <div className="ml-auto flex gap-[10px]">
            <PushButton className="w-[73px] border-[#0078d7] shadow-[inset_0_0_0_1px_#0078d7]">OK</PushButton>
            <PushButton className="w-[73px]">Annuler</PushButton>
          </div>
        </div>
      </div>
    </section>
  );
}

function Callout() {
  return (
    <svg viewBox="0 0 56 60" className="pointer-events-none absolute left-[554px] top-[189px] h-[60px] w-[56px]" aria-hidden="true">
      <path d="M15 18l20 24" stroke="#000" strokeOpacity=".2" strokeWidth="4" transform="translate(2 3)" />
      <path d="M4.500 3.500h13v13h-13z" fill="none" stroke="#ff4646" strokeWidth="3" />
      <path d="M13 18l22 25" stroke="#ff4646" strokeWidth="5" />
      <path d="M26 43l15-12 4 23z" fill="#ff4646" />
    </svg>
  );
}

export default function App() {
  return (
    <div className="relative flex min-h-screen flex-col overflow-hidden border border-[#2b4a87] bg-white">
      <MainChrome />
      <Workspace />
      <StatusBar />
      <ModuleWindow />
      <BucklingDialog />
      <Callout />
    </div>
  );
}
